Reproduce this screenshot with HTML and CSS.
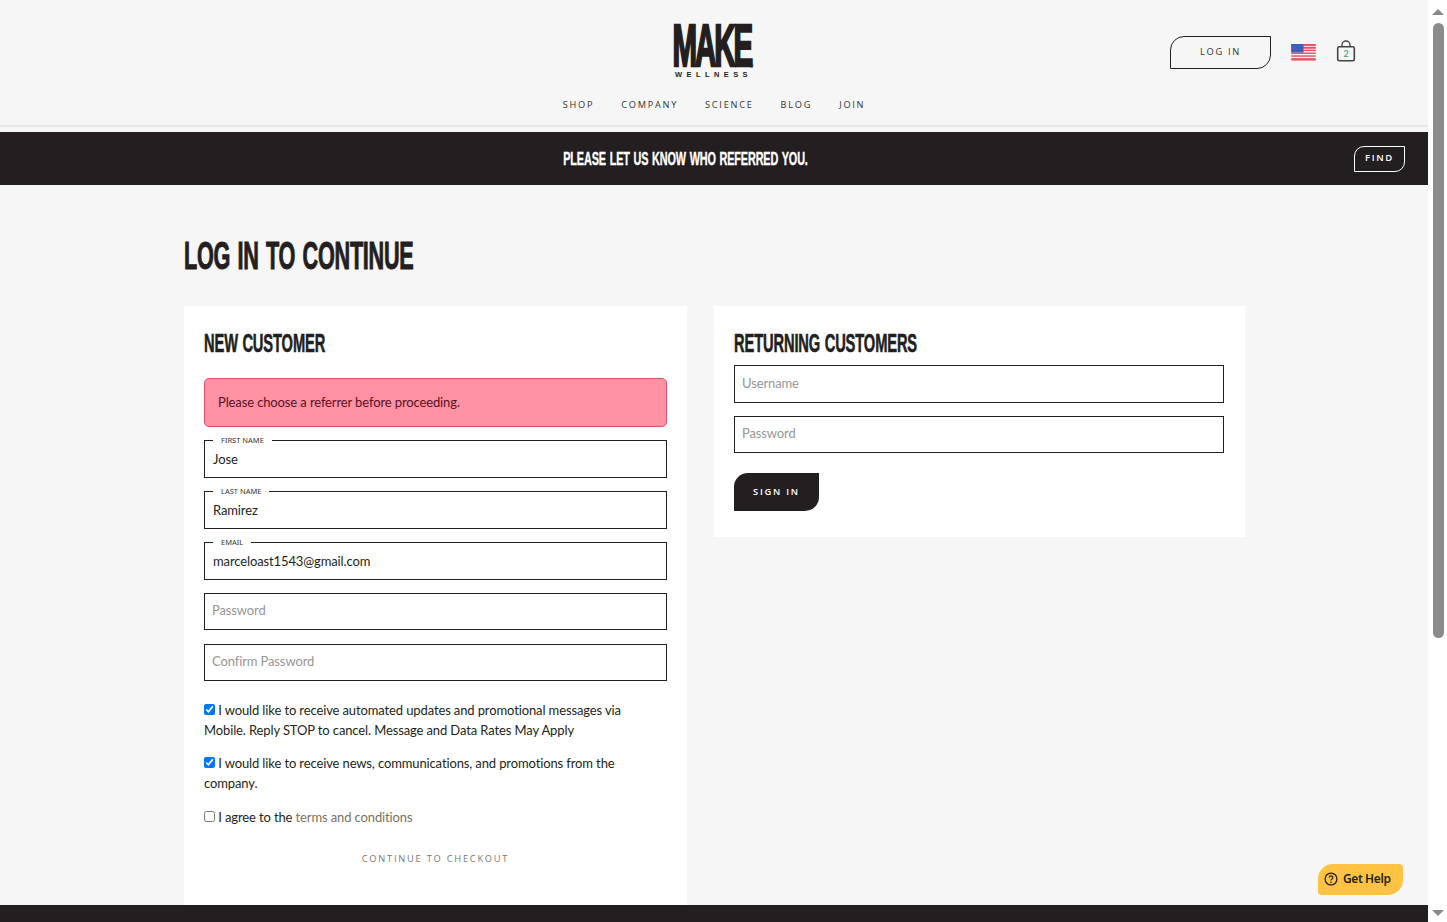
FILE: index.html
```html
<!DOCTYPE html>
<html lang="en">
<head>
<meta charset="utf-8">
<title>Log in to continue</title>
<link rel="stylesheet" href="styles.css">
</head>
<body>
<div class="window">
  <div class="page">
    <header class="site-header">
      <div class="header-top">
        <a class="logo" href="#">
          <span class="logo-make">MAKE</span>
          <span class="logo-sub">WELLNESS</span>
          <span class="logo-tm">®</span>
        </a>
        <div class="header-actions">
          <a class="login-btn" href="#">LOG IN</a>
          <svg class="flag" width="25" height="17" viewBox="0 0 26 18">
            <rect width="26" height="18" fill="#f2f2f2"/>
            <g fill="#e8505f">
              <rect width="26" height="2"/><rect y="3" width="26" height="2"/><rect y="6" width="26" height="1.5"/>
              <rect y="9" width="26" height="1.5"/><rect y="12" width="26" height="1.5"/><rect y="15" width="26" height="2.5"/>
            </g>
            <rect width="13" height="9" fill="#3d5fc0"/>
          </svg>
          <span class="cart">
            <svg width="20" height="22" viewBox="0 0 20 22">
              <path d="M6 7V5a4 4 0 0 1 8 0v2" fill="none" stroke="#444" stroke-width="1.4"/>
              <rect x="1.7" y="6.7" width="16.6" height="14" rx="1.5" fill="none" stroke="#444" stroke-width="1.6"/>
            </svg>
            <span class="cart-count">2</span>
          </span>
        </div>
      </div>
      <nav class="main-nav">
        <a href="#">SHOP</a><a href="#">COMPANY</a><a href="#">SCIENCE</a><a href="#">BLOG</a><a href="#">JOIN</a>
      </nav>
    </header>
    <div class="referral">
      <span class="referral-text">PLEASE LET US KNOW WHO REFERRED YOU.</span>
      <a class="find-btn" href="#">FIND</a>
    </div>
    <main class="content">
      <h1 class="page-title">LOG IN TO CONTINUE</h1>
      <div class="columns">
        <section class="card card-new">
          <h2 class="card-title">NEW CUSTOMER</h2>
          <div class="alert">Please choose a referrer before proceeding.</div>
          <div class="fields">
            <div class="field"><span class="field-label">FIRST NAME</span><span class="value">Jose</span></div>
            <div class="field"><span class="field-label">LAST NAME</span><span class="value">Ramirez</span></div>
            <div class="field"><span class="field-label">EMAIL</span><span class="value">marceloast1543@gmail.com</span></div>
            <div class="field field-plain"><span class="placeholder">Password</span></div>
            <div class="field field-plain field-confirm"><span class="placeholder">Confirm Password</span></div>
          </div>
          <div class="checks">
            <label class="check"><input type="checkbox" checked> I would like to receive automated updates and promotional messages via Mobile. Reply STOP to cancel. Message and Data Rates May Apply</label>
            <label class="check"><input type="checkbox" checked> I would like to receive news, communications, and promotions from the company.</label>
            <label class="check check-terms"><input type="checkbox"> I agree to the <a class="terms" href="#">terms and conditions</a></label>
          </div>
          <a class="continue" href="#">CONTINUE TO CHECKOUT</a>
        </section>
        <section class="card card-returning">
          <h2 class="card-title">RETURNING CUSTOMERS</h2>
          <div class="fields returning-fields">
            <div class="field"><span class="placeholder">Username</span></div>
            <div class="field field-plain"><span class="placeholder">Password</span></div>
          </div>
          <a class="signin" href="#">SIGN IN</a>
        </section>
      </div>
    </main>
    <a class="help" href="#">
      <svg width="14" height="14" viewBox="0 0 14 14"><circle cx="7" cy="7" r="5.9" fill="none" stroke="#231f20" stroke-width="1.3"/><path d="M5.2 5.6a1.8 1.8 0 1 1 2.6 1.6c-.6.3-.8.6-.8 1.2" fill="none" stroke="#231f20" stroke-width="1.2"/><circle cx="7" cy="10.2" r=".8" fill="#231f20"/></svg>
      Get Help
    </a>
    <footer class="site-footer"></footer>
  </div>
  <div class="scrollbar">
    <span class="arrow-up"></span>
    <span class="thumb"></span>
    <span class="track"></span>
    <span class="arrow-down"></span>
  </div>
</div>
</body>
</html>
```
FILE: styles.css
```css
* { box-sizing: border-box; }
html, body { margin: 0; height: 922px; overflow: hidden; }
body { font-family: "Lato", sans-serif; color: #231f20; background: #f6f6f6; }
a { text-decoration: none; color: inherit; }
.window { display: flex; height: 922px; }
.page { position: relative; width: 1428px; height: 922px; overflow: hidden; background: #f6f6f6; display: flex; flex-direction: column; }

.site-header { flex: none; height: 127px; border-bottom: 2px solid #e6e6e6; display: flex; flex-direction: column; }
.header-top { position: relative; flex: none; height: 93px; display: flex; justify-content: center; padding-top: 24px; }
.logo { position: relative; display: flex; flex-direction: column; align-items: center; width: 86px; margin-right: 5px; }
.logo-make { font-family: "Liberation Sans Narrow", "Liberation Sans", sans-serif; font-weight: 700; font-size: 59px; line-height: 45px; height: 45px; letter-spacing: -4px; -webkit-text-stroke: 2.5px #231f20; transform: scaleX(.5); white-space: nowrap; color: #231f20; }
.logo-sub { font-family: "Liberation Sans", sans-serif; font-weight: 700; font-size: 7.5px; line-height: 8px; letter-spacing: 4.4px; margin-top: 2px; margin-left: 4px; white-space: nowrap; }
.logo-tm { position: absolute; left: 81px; top: 39px; font-size: 5px; line-height: 6px; font-weight: 700; }
.header-actions { position: absolute; left: 1170px; top: 36px; display: flex; align-items: center; }
.login-btn { width: 101px; height: 33px; border: 1px solid #231f20; border-radius: 14px 0 14px 0; font-family: "Open Sans", sans-serif; font-size: 9.3px; letter-spacing: 1.7px; display: flex; align-items: center; justify-content: center; padding-bottom: 3px; color: #333; }
.flag { margin-left: 20px; }
.cart { position: relative; margin-left: 20px; width: 20px; height: 22px; margin-top: -3px; }
.cart svg { display: block; }
.cart-count { position: absolute; left: 0; right: 0; top: 8px; text-align: center; font-size: 9px; line-height: 12px; font-weight: 700; color: #5aa58f; }

.main-nav { display: flex; justify-content: center; gap: 27px; font-family: "Open Sans", sans-serif; font-size: 9.2px; letter-spacing: 1.75px; line-height: 14px; color: #333; padding-top: 5px; }

.referral { position: relative; flex: none; margin-top: 5px; height: 53px; padding-right: 57px; background: #231f20; display: flex; align-items: center; justify-content: center; }
.referral-text { font-family: "Liberation Sans Narrow", "Liberation Sans", sans-serif; font-weight: 700; font-size: 19px; color: #fff; display: inline-block; letter-spacing: -.2px; word-spacing: 1.5px; -webkit-text-stroke: .4px #fff; transform: scaleX(.57); white-space: nowrap; }
.find-btn { position: absolute; right: 23px; top: 14px; width: 51px; height: 26px; border: 1px solid #fff; border-radius: 10px 0 10px 0; color: #fff; font-family: "Open Sans", sans-serif; font-weight: 600; font-size: 9.5px; letter-spacing: 1.6px; display: flex; align-items: center; justify-content: center; padding-bottom: 4px; }

.content { width: 1061px; margin-left: 184px; padding-top: 52px; }
.page-title { margin: 0; height: 38px; font-family: "Liberation Sans Narrow", "Liberation Sans", sans-serif; font-weight: 700; font-size: 38px; line-height: 38px; letter-spacing: -.5px; word-spacing: 3px; -webkit-text-stroke: 1px #231f20; transform: scaleX(.57); transform-origin: left; white-space: nowrap; }
.columns { display: flex; gap: 27px; align-items: flex-start; margin-top: 31px; }
.card { background: #fff; padding: 20px; }
.card-new { width: 503px; height: 640px; }
.card-returning { width: 531px; height: 231px; padding-right: 21px; }
.card-title { margin: 0; height: 34px; font-family: "Liberation Sans Narrow", "Liberation Sans", sans-serif; font-weight: 700; font-size: 25.5px; line-height: 34px; letter-spacing: -.2px; word-spacing: 1px; -webkit-text-stroke: .6px #231f20; transform: scaleX(.575); transform-origin: left; white-space: nowrap; }
.alert { margin-top: 18px; height: 49px; background: #ff91a5; border: 1px solid #e2506e; border-radius: 5px; padding: 0 13px 1px; display: flex; align-items: center; font-size: 13px; letter-spacing: -.12px; color: #5b1020; }
.fields { display: flex; flex-direction: column; gap: 13px; margin-top: 13px; }
.returning-fields { margin-top: 5px; }
.field { position: relative; height: 38px; border: 1px solid #231f20; padding: 0 7px 3px 8px; display: flex; align-items: center; font-size: 13px; letter-spacing: -.12px; }
.field-plain { height: 37px; }
.field-confirm { margin-top: 1px; }
.field-label { position: absolute; left: 8px; top: -6px; background: #fff; padding: 0 8px; font-size: 7.5px; line-height: 10px; letter-spacing: 0; color: #333; font-family: "Noto Sans", sans-serif; }
.value { padding-top: 2px; color: #231f20; }
.placeholder { margin-left: -1px; color: #969696; }
.checks { margin-top: 19px; padding-right: 25px; display: flex; flex-direction: column; gap: 13px; }
.check { display: block; font-size: 13px; line-height: 20px; letter-spacing: -.12px; color: #231f20; }
.check-terms { margin-top: 1px; }
.check input { margin: 0; width: 11px; height: 11px; vertical-align: 0; }
.terms { color: #7d6f5e; }
.continue { display: block; margin-top: 25px; text-align: center; font-family: "Open Sans", sans-serif; font-size: 9.3px; letter-spacing: 1.75px; color: #777; }
.signin { display: flex; align-items: center; justify-content: center; margin-top: 20px; padding-bottom: 2px; width: 85px; height: 38px; background: #231f20; color: #fff; border-radius: 14px 0 14px 0; font-family: "Open Sans", sans-serif; font-weight: 600; font-size: 9.3px; letter-spacing: 1.75px; }

.help { position: absolute; left: 1318px; top: 864px; width: 85px; height: 31px; background: #fec343; border-radius: 15px 4px 15px 4px; display: flex; align-items: center; gap: 5px; padding: 0 0 2px 6px; font-family: "Noto Sans", sans-serif; font-size: 12px; font-weight: 600; letter-spacing: -.4px; color: #231f20; }
.site-footer { position: absolute; left: 0; right: 0; top: 905px; height: 17px; background: #231f20; }

.scrollbar { width: 19px; height: 922px; background: #fff; display: flex; flex-direction: column; align-items: center; }
.arrow-up { width: 0; height: 0; margin-top: 9px; border-left: 6px solid transparent; border-right: 6px solid transparent; border-bottom: 6px solid #888; }
.thumb { width: 11px; height: 615px; margin-top: 8px; margin-left: 1px; background: #8b8b8b; border-radius: 6px; }
.track { flex: 1; }
.arrow-down { width: 0; height: 0; margin-bottom: 6px; border-left: 6px solid transparent; border-right: 6px solid transparent; border-top: 6px solid #888; }
```
